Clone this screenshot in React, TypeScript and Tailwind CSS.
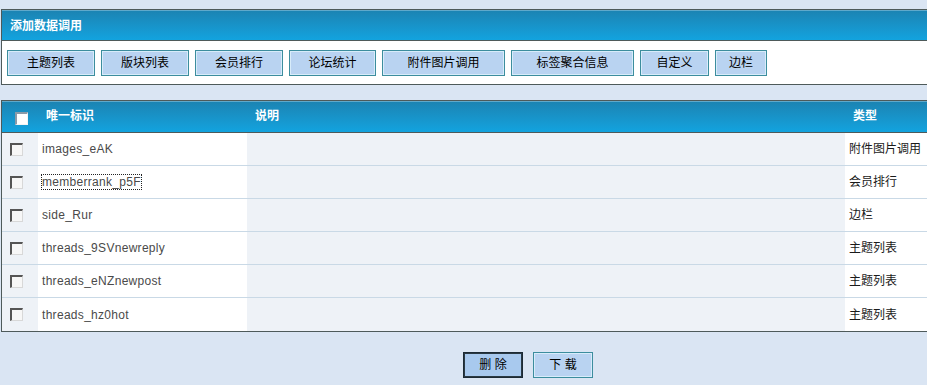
const tabs = [
  { label: "主题列表", w: "w-[88px]" },
  { label: "版块列表", w: "w-[88px]" },
  { label: "会员排行", w: "w-[88px]" },
  { label: "论坛统计", w: "w-[87px]" },
  { label: "附件图片调用", w: "w-[123px]" },
  { label: "标签聚合信息", w: "w-[123px]" },
  { label: "自定义", w: "w-[69px]" },
  { label: "边栏", w: "w-[52px]" },
];

const rows = [
  { id: "images_eAK", type: "附件图片调用" },
  { id: "memberrank_p5F", type: "会员排行", focus: true },
  { id: "side_Rur", type: "边栏" },
  { id: "threads_9SVnewreply", type: "主题列表" },
  { id: "threads_eNZnewpost", type: "主题列表" },
  { id: "threads_hz0hot", type: "主题列表" },
];

function Check({ light }: { light?: boolean }) {
  return (
    <span
      className={
        "block w-[13px] h-[13px] border-t-2 border-l-2 border-b border-r " +
        (light
          ? "bg-white border-t-[#8a9aa8] border-l-[#8a9aa8] border-b-[#f4f4f4] border-r-[#f4f4f4]"
          : "bg-[#f7f7f7] border-t-[#555] border-l-[#555] border-b-[#d8d8d8] border-r-[#d8d8d8]")
      }
    />
  );
}

function Btn({ children, w, dark }: { children: React.ReactNode; w: string; dark?: boolean }) {
  return (
    <button
      className={
        w +
        " h-[26px] flex items-center justify-center text-[12px] text-black border " +
        (dark
          ? "border-[#1c2a35] bg-[#a8c9ee] shadow-[inset_0_0_0_1px_#2a3a44]"
          : "border-[#3c8d9e] bg-[#b9d3f1] shadow-[inset_0_0_0_1px_#d8ecfa]")
      }
    >
      {children}
    </button>
  );
}

export default function App() {
  return (
    <div
      className="w-[927px] h-[385px] overflow-hidden bg-[#dae5f3] pt-[9px] pl-[1px]"
      style={{ fontFamily: "'Liberation Sans', 'Noto Sans CJK SC', sans-serif" }}
    >
      <div className="w-[940px] border-t border-l border-b border-[#4e5a5a]">
        <div className="h-[31px] flex items-center pl-[8px] border-b border-[#4e5a5a] border-t border-t-[#5fa9cb] bg-gradient-to-b from-[#1b84b3] to-[#12a3df] text-white text-[12px] font-bold">
          添加数据调用
        </div>
        <div className="h-[43px] bg-white flex items-center gap-[6px] pl-[5px]">
          {tabs.map((t) => (
            <Btn key={t.label} w={t.w}>
              {t.label}
            </Btn>
          ))}
        </div>
      </div>

      <div className="mt-[15px] w-[940px] border-t border-l border-b border-[#4e5a5a]">
        <div className="h-[32px] grid grid-cols-[36px_209px_598px_1fr] items-center border-b border-[#4e5a5a] border-t border-t-[#5fa9cb] bg-gradient-to-b from-[#1b84b3] to-[#12a3df] text-white text-[12px] font-bold">
          <div className="pl-[13px] pt-[2px]">
            <Check light />
          </div>
          <div className="pl-[8px] pb-[2px]">唯一标识</div>
          <div className="pl-[8px] pb-[2px]">说明</div>
          <div className="pl-[8px] pb-[2px]">类型</div>
        </div>
        {rows.map((r, i) => (
          <div
            key={r.id}
            className={
              "h-[33px] grid grid-cols-[36px_209px_598px_1fr] text-[12px] " +
              (i < rows.length - 1 ? "border-b border-[#c9d9e6]" : "")
            }
          >
            <div className="bg-[#eef2f7] flex items-center pl-[8px]">
              <Check />
            </div>
            <div className="bg-white flex items-center pl-[4px] text-[#4a4a4a] tracking-[0.3px]">
              <span className={r.focus ? "outline outline-1 outline-dotted outline-[#222] leading-[14px]" : ""}>
                {r.id}
              </span>
            </div>
            <div className="bg-[#eef2f7]" />
            <div className="bg-white flex items-center pl-[4px] text-[#1a1a1a]">{r.type}</div>
          </div>
        ))}
      </div>

      <div className="mt-[20px] flex gap-[10px] pl-[462px]">
        <Btn w="w-[60px]" dark>
          删&nbsp;除
        </Btn>
        <Btn w="w-[60px]">下&nbsp;载</Btn>
      </div>
    </div>
  );
}
